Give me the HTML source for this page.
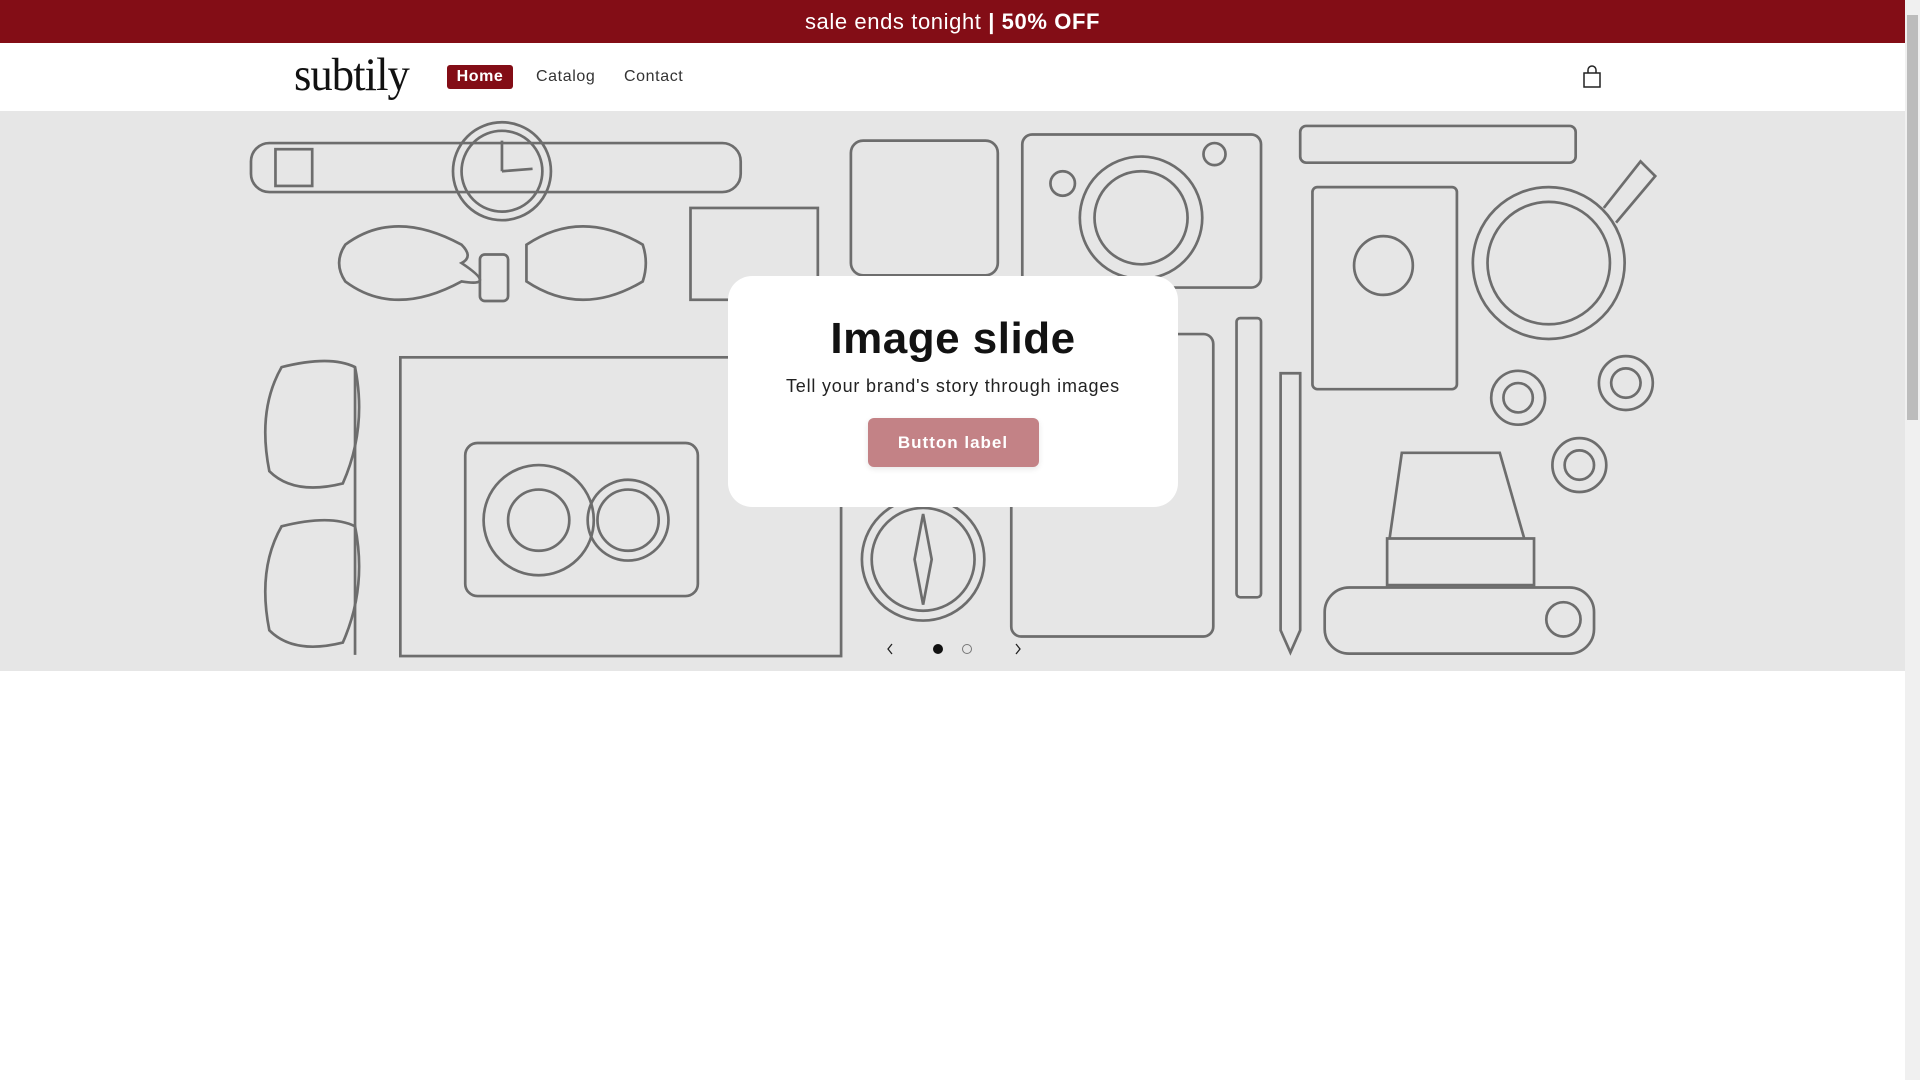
<!DOCTYPE html>
<html><head><meta charset="utf-8"><style>
*{margin:0;padding:0;box-sizing:border-box}
body{width:1920px;height:1080px;overflow:hidden;background:#fff;font-family:"Liberation Sans",sans-serif;position:relative}
.bar{position:absolute;left:0;top:0;width:1905px;height:43px;background:#830d16;color:#fff;font-size:22px;letter-spacing:.6px;text-align:center;line-height:43px}
.hdr{position:absolute;left:0;top:43px;width:1905px;height:68px;background:#fff}
.logo{position:absolute;left:294px;top:5px;font-family:"Liberation Serif",serif;font-size:47px;color:#111;transform:scaleX(.95);transform-origin:left;letter-spacing:-1px}
.nav{position:absolute;top:25px;font-size:16px;color:#333;letter-spacing:.6px}
.home{left:447px;top:22px;width:66px;height:24px;background:#830d16;color:#fff;font-weight:bold;border-radius:3px;text-align:center;line-height:24px}
.hero{position:absolute;left:0;top:111px;width:1905px;height:560px;background:#e6e6e6;overflow:hidden}
.card{position:absolute;left:728px;top:165px;width:450px;height:231px;background:#fff;border-radius:24px;text-align:center}
.card h1{font-size:44px;margin-top:38px;color:#121212;letter-spacing:.5px}
.card p{font-size:18px;margin-top:12px;color:#222;letter-spacing:.8px}
.btn{display:inline-block;margin-top:21px;width:171px;height:49px;background:#c38286;color:#fff;font-weight:bold;font-size:17px;line-height:49px;border-radius:6px;letter-spacing:1px;box-shadow:0 2px 6px rgba(0,0,0,.1)}
.sb{position:absolute;left:1905px;top:0;width:15px;height:1080px;background:#f0f0f0}
.th{position:absolute;left:1907px;top:15px;width:11px;height:405px;background:#bcbcbc}
</style></head><body>
<div class="bar">sale ends tonight <b>| 50% OFF</b></div>
<div class="hdr">
<div class="logo">subtily</div>
<div class="nav home">Home</div>
<div class="nav" style="left:536px">Catalog</div>
<div class="nav" style="left:624px">Contact</div>
<svg style="position:absolute;left:1582px;top:22px" width="20" height="24" viewBox="0 0 20 24" fill="none" stroke="#222" stroke-width="1.5"><path d="M2 8h16v14H2z"/><path d="M6 8V5a4 4 0 0 1 8 0v3"/></svg>
</div>
<div class="hero">
<svg width="1905" height="560" viewBox="0 91 1556 457" fill="none" stroke="#6d6d6d" stroke-width="2.2">
<rect x="205" y="117" width="400" height="40" rx="15"/><rect x="225" y="122" width="30" height="30"/>
<circle cx="410" cy="140" r="40"/><circle cx="410" cy="140" r="33"/><path d="M410 140V115M410 140l25 -2"/>
<path d="M282 200q40 -30 95 0q10 10 0 15q30 20 0 15q-55 30 -95 0q-10 -15 0 -30z"/><path d="M430 200q45 -30 95 0q5 15 0 30q-50 30 -95 0z"/><rect x="392" y="208" width="23" height="38" rx="4"/>
<path d="M230 300q40 -10 60 0q10 50 -10 95q-40 10 -60 -10q-10 -50 10 -85z"/><path d="M230 430q40 -10 60 0q10 50 -10 95q-40 10 -60 -10q-10 -50 10 -85z"/><path d="M290 300v235"/>
<rect x="327" y="292" width="360" height="244"/><rect x="380" y="362" width="190" height="125" rx="10"/><circle cx="440" cy="425" r="45"/><circle cx="440" cy="425" r="25"/><circle cx="513" cy="425" r="33"/><circle cx="513" cy="425" r="25"/>
<rect x="564" y="170" width="104" height="75"/><rect x="695" y="115" width="120" height="110" rx="10"/>
<rect x="835" y="110" width="195" height="125" rx="8"/><circle cx="932" cy="178" r="50"/><circle cx="932" cy="178" r="38"/><circle cx="868" cy="150" r="10"/><circle cx="992" cy="126" r="9"/>
<rect x="1062" y="103" width="225" height="30" rx="5"/><rect x="1072" y="153" width="118" height="165" rx="4"/><circle cx="1130" cy="217" r="24"/>
<circle cx="1265" cy="215" r="62"/><circle cx="1265" cy="215" r="50"/><path d="M1310 170l30 -38l12 12l-32 38"/>
<circle cx="1240" cy="325" r="22"/><circle cx="1240" cy="325" r="12"/><circle cx="1328" cy="313" r="22"/><circle cx="1328" cy="313" r="12"/><circle cx="1290" cy="380" r="22"/><circle cx="1290" cy="380" r="12"/>
<circle cx="754" cy="457" r="50"/><circle cx="754" cy="457" r="42"/><path d="M754 420l-7 37l7 37l7 -37z"/>
<rect x="826" y="273" width="165" height="247" rx="8"/><rect x="1010" y="260" width="20" height="228" rx="3"/><path d="M1046 305h16v210l-8 18l-8 -18z"/>
<rect x="1082" y="480" width="220" height="54" rx="20"/><circle cx="1277" cy="506" r="14"/><path d="M1145 370h80l20 70h-110zM1133 440h120v38h-120z"/>
</svg>
<div class="card"><h1>Image slide</h1><p>Tell your brand's story through images</p><div class="btn">Button label</div></div>
<svg style="position:absolute;left:883px;top:530px" width="140" height="16" viewBox="0 0 140 16"><path d="M9 3l-4 5 4 5M133 3l4 5-4 5" stroke="#222" stroke-width="1.3" fill="none"/><circle cx="55" cy="8" r="5" fill="#111"/><circle cx="84" cy="8" r="4.5" fill="none" stroke="#777"/></svg>
</div>
<div class="sb"></div><div class="th"></div>
</body></html>
